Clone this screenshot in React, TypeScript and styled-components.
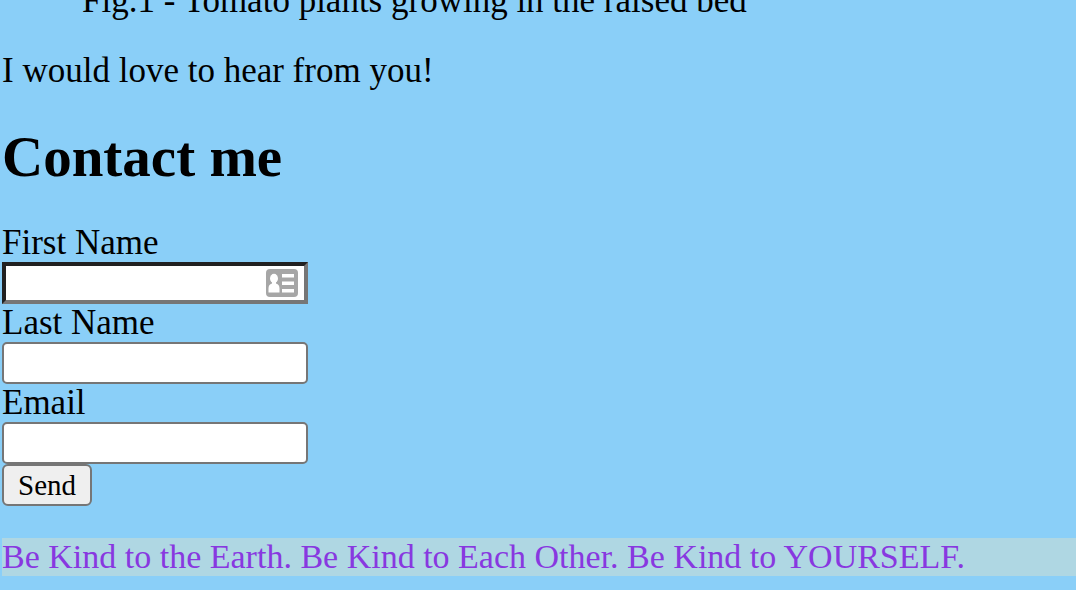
import React from "react";
import styled, { createGlobalStyle } from "styled-components";

const GlobalStyle = createGlobalStyle`
  *, *::before, *::after { box-sizing: border-box; }
  body {
    margin: 0;
    background: #8acff8;
    color: #000;
    font-family: Georgia, "Liberation Serif", serif;
    font-size: 35px;
    line-height: 38px;
    overflow-x: hidden;
  }
`;

const Page = styled.main`
  margin-top: -18px;
  padding: 0 0 14px 2px;
`;

const Figure = styled.figure`
  margin: 0 80px 32px;
`;

const Paragraph = styled.p`
  margin: 0 0 40px;
`;

const Heading = styled.h2`
  margin: 0 0 40px;
  font-size: 57px;
  line-height: 54px;
  font-weight: 700;
`;

const Form = styled.form`
  display: flex;
  flex-direction: column;
  align-items: flex-start;
`;

const Field = styled.div`
  position: relative;
  display: flex;
  flex-direction: column;
  width: 306px;
  max-width: 100%;
`;

const TextInput = styled.input<{ $inset?: boolean }>`
  width: 100%;
  height: 42px;
  padding: 2px 4px;
  background: #fff;
  border: ${(p) => (p.$inset ? "4px solid" : "2px solid #767676")};
  ${(p) => p.$inset && "border-color: #212121 #767676 #767676 #212121;"}
  border-radius: ${(p) => (p.$inset ? "0" : "5px")};
  font: inherit;
  font-size: 29px;
  outline: none;
`;

const AutofillIcon = styled.svg`
  position: absolute;
  right: 10px;
  bottom: 7px;
  width: 32px;
  height: 28px;
`;

const SendButton = styled.button`
  height: 42px;
  padding: 0 14px;
  border: 2px solid #767676;
  border-radius: 6px;
  background: #efefef;
  color: #000;
  font: inherit;
  font-size: 29px;
  line-height: 38px;
`;

const Footer = styled.footer`
  margin-top: 32px;
  background: #afd7e3;
  color: #8838e0;
  font-size: 34px;
`;

export default function App() {
  return (
    <>
      <GlobalStyle />
      <Page>
        <Figure>
          <figcaption>Fig.1 - Tomato plants growing in the raised bed</figcaption>
        </Figure>
        <Paragraph>I would love to hear from you!</Paragraph>
        <Heading>Contact me</Heading>
        <Form onSubmit={(e) => e.preventDefault()}>
          <Field>
            <label htmlFor="first-name">First Name</label>
            <TextInput id="first-name" type="text" $inset />
            <AutofillIcon viewBox="0 0 32 28" aria-hidden="true">
              <rect width="32" height="28" rx="4" fill="#a6a6a6" />
              <g fill="#fff">
                <ellipse cx="8" cy="9.5" rx="4" ry="4.7" />
                <path d="M6 12h4v2.500c2.500 .8 3.500 2.500 3.500 5V23.500H2.500V19.500C2.500 17 3.500 15.300 6 14.500z" />
                <rect x="16" y="5" width="12" height="3.500" />
                <rect x="16" y="12.500" width="12" height="3.500" />
                <rect x="16" y="20" width="12" height="3.500" />
              </g>
            </AutofillIcon>
          </Field>
          <Field>
            <label htmlFor="last-name">Last Name</label>
            <TextInput id="last-name" type="text" />
          </Field>
          <Field>
            <label htmlFor="email">Email</label>
            <TextInput id="email" type="email" />
          </Field>
          <SendButton type="submit">Send</SendButton>
        </Form>
        <Footer>Be Kind to the Earth. Be Kind to Each Other. Be Kind to YOURSELF.</Footer>
      </Page>
    </>
  );
}
